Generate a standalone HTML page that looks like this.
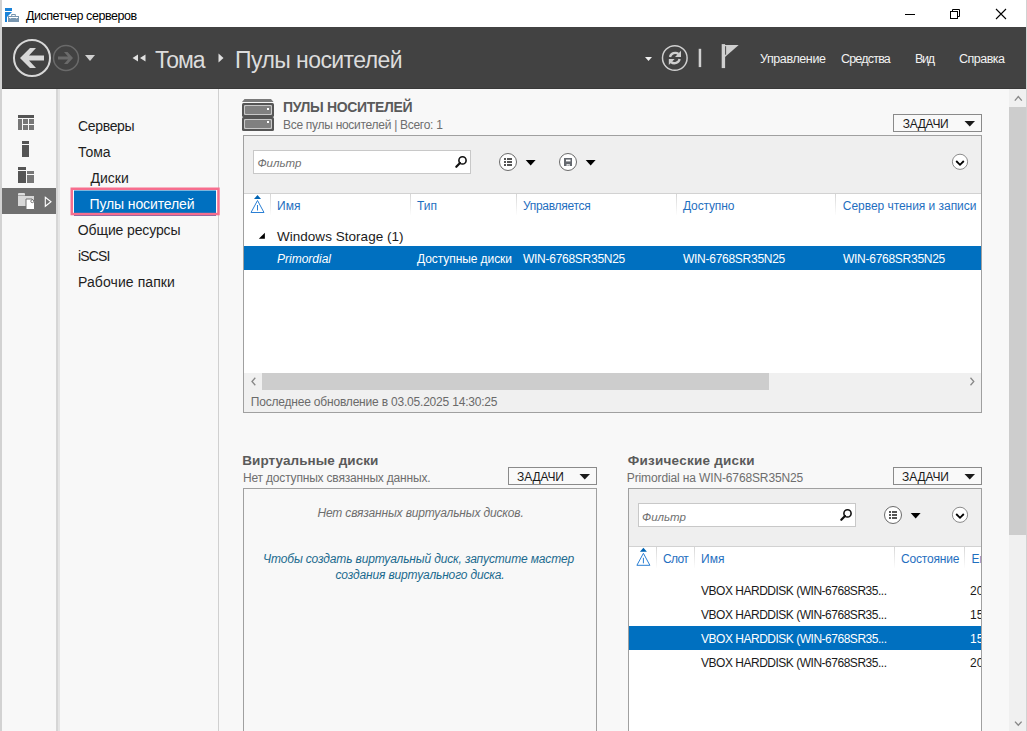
<!DOCTYPE html>
<html><head><meta charset="utf-8"><style>
html,body{margin:0;padding:0;}
body{width:1027px;height:731px;overflow:hidden;position:relative;background:#f8f8f8;font-family:"Liberation Sans",sans-serif;}
.a{position:absolute;box-sizing:border-box;}
.t{position:absolute;white-space:nowrap;line-height:1;font-family:"Liberation Sans",sans-serif;}
svg{position:absolute;left:0;top:0;}

</style></head><body>
<!-- window frame -->
<div class="a" style="left:0;top:0;width:1027px;height:27px;background:#fff"></div>
<div class="a" style="left:0;top:0;width:2px;height:731px;background:#d2d2d2"></div>
<div class="a" style="left:1026px;top:0;width:1px;height:731px;background:#d2d2d2"></div>
<!-- dark bar -->
<div class="a" style="left:2px;top:27px;width:1024px;height:62px;background:#424242;border-bottom:1px solid #393939"></div>
<!-- sidebar separator -->
<div class="a" style="left:56px;top:89px;width:4px;height:642px;background:linear-gradient(90deg,#d6d6d6 0,#d6d6d6 2px,#e5e5e5 2px)"></div>
<!-- nav right border -->
<div class="a" style="left:218px;top:89px;width:1px;height:642px;background:#d0d0d0"></div>
<!-- sidebar selected -->
<div class="a" style="left:2px;top:188px;width:54px;height:26px;background:#707070"></div>
<!-- nav selected -->
<svg width="1027" height="731" style="position:absolute;left:0;top:0">
<rect x="73" y="190" width="144" height="23" fill="#fafafa"/>
<rect x="74" y="190.5" width="142" height="25.5" fill="#0070c0"/>
<rect x="74" y="215" width="142" height="1" fill="#6f64a6"/>
<rect x="71.75" y="188.75" width="146.7" height="25.3" fill="none" stroke="#f76e8e" stroke-width="2.5"/>
<rect x="218" y="89" width="1" height="98" fill="#d0d0d0"/>
</svg>
<!-- vertical scrollbar -->
<div class="a" style="left:1009px;top:89px;width:17px;height:642px;background:#f0f0f0"></div>
<div class="a" style="left:1009px;top:107px;width:17px;height:428px;background:#cdcdcd"></div>

<!-- top panel -->
<div class="a" style="left:243px;top:135px;width:739px;height:278px;background:#fff;border:1px solid #a0a0a0"></div>
<div class="a" style="left:244px;top:136px;width:737px;height:58px;background:#efefef;border-bottom:1px solid #d2d2d2"></div>
<div class="a" style="left:253px;top:150px;width:218px;height:24px;background:#fff;border:1px solid #c8c8c8"></div>
<!-- col separators -->
<div class="a" style="left:270px;top:194px;width:1px;height:21px;background:linear-gradient(#d6d6d6,#fdfdfd)"></div>
<div class="a" style="left:410px;top:194px;width:1px;height:21px;background:linear-gradient(#d6d6d6,#fdfdfd)"></div>
<div class="a" style="left:516px;top:194px;width:1px;height:21px;background:linear-gradient(#d6d6d6,#fdfdfd)"></div>
<div class="a" style="left:676px;top:194px;width:1px;height:21px;background:linear-gradient(#d6d6d6,#fdfdfd)"></div>
<div class="a" style="left:835px;top:194px;width:1px;height:21px;background:linear-gradient(#d6d6d6,#fdfdfd)"></div>
<!-- selected row -->
<div class="a" style="left:244px;top:246px;width:737px;height:24px;background:#0070c0"></div>
<!-- h scrollbar -->
<div class="a" style="left:244px;top:373px;width:737px;height:17px;background:#f0f0f0"></div>
<div class="a" style="left:262px;top:373px;width:507px;height:17px;background:#cdcdcd"></div>
<div class="a" style="left:244px;top:390px;width:737px;height:22px;background:#f0f0f0"></div>
<!-- ЗАДАЧИ buttons -->
<div class="a" style="left:893px;top:114px;width:89px;height:18px;background:#f9f9f9;border:1px solid #8a8a8a"></div>
<div class="a" style="left:508px;top:467px;width:89px;height:18px;background:#f9f9f9;border:1px solid #8a8a8a"></div>
<div class="a" style="left:893px;top:467px;width:89px;height:18px;background:#f9f9f9;border:1px solid #8a8a8a"></div>

<!-- lower left panel -->
<div class="a" style="left:243px;top:488px;width:354px;height:250px;background:#f8f8f8;border:1px solid #a0a0a0"></div>
<!-- lower right panel -->
<div class="a" style="left:628px;top:488px;width:354px;height:250px;background:#fff;border:1px solid #a0a0a0"></div>
<div class="a" style="left:629px;top:489px;width:352px;height:58px;background:#efefef;border-bottom:1px solid #d2d2d2"></div>
<div class="a" style="left:638px;top:503px;width:218px;height:24px;background:#fff;border:1px solid #c8c8c8"></div>
<div class="a" style="left:656px;top:547px;width:1px;height:21px;background:linear-gradient(#d6d6d6,#fdfdfd)"></div>
<div class="a" style="left:694px;top:547px;width:1px;height:21px;background:linear-gradient(#d6d6d6,#fdfdfd)"></div>
<div class="a" style="left:894px;top:547px;width:1px;height:21px;background:linear-gradient(#d6d6d6,#fdfdfd)"></div>
<div class="a" style="left:964px;top:547px;width:1px;height:21px;background:linear-gradient(#d6d6d6,#fdfdfd)"></div>
<div class="a" style="left:629px;top:626px;width:352px;height:24px;background:#0070c0"></div>

<svg width="1027" height="731" viewBox="0 0 1027 731">
<!-- app icon -->
<rect x="5" y="8" width="7" height="3" fill="#1a82d8"/>
<path d="M5 12 H12 L7 17 V22 H5 Z" fill="#1a82d8"/>
<path d="M11.2 16 V14.6 Q11.2 14 11.8 14 H15.2 Q15.8 14 15.8 14.6 V16 H14.8 V15 H12.2 V16 Z" fill="#7896b0"/>
<rect x="8" y="16" width="11" height="6" fill="#7896b0"/>
<path d="M9 17 H18 V18 H16.8 L16.3 19 L15.8 18 H11.2 L10.7 19 L10.2 18 H9 Z" fill="#fff"/>
<!-- caption buttons -->
<line x1="905" y1="14.5" x2="915" y2="14.5" stroke="#000" stroke-width="1"/>
<rect x="950.5" y="11.5" width="7" height="7" fill="none" stroke="#000"/>
<path d="M952.5 11.5 V9.5 H959.5 V16.5 H957.5" fill="none" stroke="#000"/>
<path d="M996 9 L1006 19 M1006 9 L996 19" stroke="#000" stroke-width="1.1"/>
<!-- back/forward -->
<circle cx="32" cy="58" r="18" fill="none" stroke="#d8d8d8" stroke-width="2"/>
<path d="M20 58 L30 48 H36 L29 55.5 H44 V60.5 H29 L36 68 H30 Z" fill="#d8d8d8"/>
<circle cx="66" cy="58" r="12.5" fill="none" stroke="#6a6a6a" stroke-width="1.5"/>
<path d="M58 56.5 H68 L64 52 H67.5 L73 58 L67.5 64 H64 L68 59.5 H58 Z" fill="#6a6a6a"/>
<path d="M85 55 H95 L90 61 Z" fill="#d0d0d0"/>
<!-- breadcrumb arrows -->
<path d="M132.5 58 L138 54.5 V61.5 Z M140 58 L145.5 54.5 V61.5 Z" fill="#e0e0e0"/>
<path d="M218.5 53.5 L223.5 58 L218.5 62.5 Z" fill="#e0e0e0"/>
<!-- refresh area -->
<path d="M645 57 H652 L648.5 61 Z" fill="#f0f0f0"/>
<circle cx="674.8" cy="58" r="12.3" fill="none" stroke="#cfcfcf" stroke-width="1.5"/>
<path d="M670 57 A5.3 5.3 0 0 1 678.5 54" fill="none" stroke="#cfcfcf" stroke-width="2.3"/>
<path d="M681 50.8 V57 H675 Z" fill="#cfcfcf"/>
<path d="M679.6 59 A5.3 5.3 0 0 1 671 62" fill="none" stroke="#cfcfcf" stroke-width="2.3"/>
<path d="M668.8 65 V59 H674.6 Z" fill="#cfcfcf"/>
<rect x="698.7" y="48.8" width="2.5" height="18.3" fill="#d0d0d0"/>
<rect x="721.7" y="44.1" width="3.4" height="24" fill="#d0d0d0"/>
<path d="M725 45 H738.7 L725 57 Z" fill="#cfcfcf"/>
<rect x="725.1" y="46.2" width="1" height="8.5" fill="#4a4a4a"/>
<!-- sidebar icons -->
<rect x="18" y="115" width="16" height="3" fill="#555"/>
<rect x="18" y="119" width="4" height="11" fill="#777"/>
<rect x="23" y="119" width="5" height="5" fill="#777"/>
<rect x="29" y="119" width="5" height="5" fill="#777"/>
<rect x="23" y="125" width="5" height="5" fill="#777"/>
<rect x="29" y="125" width="5" height="5" fill="#777"/>
<rect x="22" y="141" width="7" height="3" fill="#555"/>
<rect x="22" y="145" width="7" height="12" fill="#555"/>
<rect x="18" y="167" width="8" height="3" fill="#555"/>
<rect x="18" y="171" width="8" height="12" fill="#555"/>
<rect x="27" y="171" width="7" height="3" fill="#777"/>
<rect x="27" y="175" width="7" height="8" fill="#777"/>
<path d="M18 194 Q18 193 19 193 H24 Q25 193 25 194 V195.5 H18 Z" fill="#dedede"/>
<rect x="18" y="196" width="16" height="10" fill="#d9d9d9"/>
<path d="M26 199 H32 L34.5 201.5 V209.5 H26 Z" fill="#fff" stroke="#707070" stroke-width="1"/>
<circle cx="32.3" cy="201.2" r="1.5" fill="#fff" stroke="#6a6a6a" stroke-width="0.9"/>
<path d="M45.3 197.3 L51 201.8 L45.3 206.3 Z" fill="none" stroke="#fff" stroke-width="1.1"/>
<!-- header server icon -->
<path d="M244.5 99 H271 L273.5 102 H242 Z" fill="#7a7a7a"/>
<rect x="242" y="103" width="32" height="14" rx="1.5" fill="#555"/>
<rect x="244" y="105" width="28" height="10" rx="1" fill="#c8c8c8"/>
<rect x="245" y="106" width="26" height="8" rx="1" fill="#808080"/>
<rect x="267" y="108" width="2" height="2" fill="#fff"/>
<rect x="242" y="117" width="32" height="14" rx="1.5" fill="#555"/>
<rect x="244" y="119" width="28" height="10" rx="1" fill="#c8c8c8"/>
<rect x="245" y="120" width="26" height="8" rx="1" fill="#808080"/>
<rect x="267" y="121" width="2" height="2" fill="#fff"/>
<!-- search icons -->
<g id="srch">
<circle cx="462.5" cy="160.4" r="3.6" fill="none" stroke="#111" stroke-width="1.6"/>
<line x1="460" y1="163" x2="456.3" y2="166.8" stroke="#111" stroke-width="2.2" stroke-linecap="round"/>
</g>
<use href="#srch" x="385" y="353"/>
<!-- toolbar icons -->
<g id="lst">
<circle cx="508" cy="162" r="8.5" fill="#fff" stroke="#6a6a6a" stroke-width="1"/>
<rect x="504" y="158" width="2" height="2" fill="#555"/><rect x="507" y="158" width="5" height="2" fill="#555"/>
<rect x="504" y="161" width="2" height="2" fill="#555"/><rect x="507" y="161" width="5" height="2" fill="#555"/>
<rect x="504" y="164" width="2" height="2" fill="#555"/><rect x="507" y="164" width="5" height="2" fill="#555"/>
<path d="M525.7 160 H535.6 L530.65 165.5 Z" fill="#000"/>
</g>
<use href="#lst" x="385" y="353"/>
<circle cx="568" cy="162" r="8.5" fill="#fff" stroke="#6a6a6a" stroke-width="1"/>
<rect x="564" y="158" width="8" height="8" fill="#64686e"/><rect x="566" y="159.6" width="4.5" height="1.8" fill="#fff"/><rect x="566.6" y="164" width="3" height="2" fill="#fff"/><rect x="567.5" y="164.6" width="1.2" height="1.2" fill="#64686e"/>
<path d="M585.7 160 H595.6 L590.65 165.5 Z" fill="#000"/>
<g id="exp">
<circle cx="960" cy="161.8" r="7.6" fill="#fff" stroke="#8a8a8a" stroke-width="1"/>
<path d="M956.2 161 L960 164.8 L963.8 161" fill="none" stroke="#000" stroke-width="1.8"/>
</g>
<use href="#exp" x="0" y="353"/>
<!-- ЗАДАЧИ triangles -->
<path d="M964.5 121 H975 L969.75 126.5 Z" fill="#1a1a1a"/>
<path d="M579.5 474 H590 L584.75 479.5 Z" fill="#1a1a1a"/>
<path d="M964.5 474 H975 L969.75 479.5 Z" fill="#1a1a1a"/>
<!-- warning icons -->
<g id="warn">
<path d="M254 199 L257.5 195 L261 199 Z" fill="#0064b4"/>
<path d="M257.5 200.5 L251 212.5 H264 Z" fill="none" stroke="#2a7fd4" stroke-width="1"/>
<line x1="257.5" y1="205" x2="257.5" y2="210.5" stroke="#2a7fd4" stroke-width="1"/>
</g>
<use href="#warn" x="385.9" y="352.8"/>
<!-- h scroll arrows -->
<path d="M255.3 377.8 L252 381.5 L255.3 385.2" fill="none" stroke="#888" stroke-width="1.3"/>
<path d="M970.5 377.8 L973.8 381.5 L970.5 385.2" fill="none" stroke="#888" stroke-width="1.3"/>
<!-- v scroll arrows -->
<path d="M1014.8 100.6 L1018.3 96.6 L1021.8 100.6" fill="none" stroke="#888" stroke-width="1.3"/>
<path d="M1015 721.6 L1018.3 725.3 L1021.6 721.6" fill="none" stroke="#888" stroke-width="1.4"/>
<!-- group triangle -->
<path d="M258.8 238.8 L264.9 232.8 V238.8 Z" fill="#000"/>
</svg>

<span class="t" id="t0" style="left:25.90px;top:10px;font-size:12.5px;color:#000;letter-spacing:-0.441px;">Диспетчер серверов</span>
<span class="t" id="t1" style="left:154.95px;top:49px;font-size:23px;color:#dcdcdc;letter-spacing:-1.000px;">Тома</span>
<span class="t" id="t2" style="left:235.10px;top:49px;font-size:23px;color:#dcdcdc;letter-spacing:-0.577px;">Пулы носителей</span>
<span class="t" id="t3" style="left:759.95px;top:53px;font-size:12.5px;color:#f2f2f2;letter-spacing:-0.389px;">Управление</span>
<span class="t" id="t4" style="left:840.95px;top:53px;font-size:12.5px;color:#f2f2f2;letter-spacing:-0.786px;">Средства</span>
<span class="t" id="t5" style="left:915.00px;top:53px;font-size:12.5px;color:#f2f2f2;letter-spacing:-1.250px;">Вид</span>
<span class="t" id="t6" style="left:959.00px;top:53px;font-size:12.5px;color:#f2f2f2;letter-spacing:-0.500px;">Справка</span>
<span class="t" id="t7" style="left:78.00px;top:119px;font-size:14px;color:#1e1e1e;letter-spacing:-0.333px;">Серверы</span>
<span class="t" id="t8" style="left:78.00px;top:145px;font-size:14px;color:#1e1e1e;">Тома</span>
<span class="t" id="t9" style="left:90.57px;top:171px;font-size:14px;color:#1e1e1e;">Диски</span>
<span class="t" id="t10" style="left:89.52px;top:197px;font-size:14px;color:#ffffff;letter-spacing:-0.115px;">Пулы носителей</span>
<span class="t" id="t11" style="left:77.84px;top:223px;font-size:14px;color:#1e1e1e;letter-spacing:-0.125px;">Общие ресурсы</span>
<span class="t" id="t12" style="left:78.05px;top:249px;font-size:14px;color:#1e1e1e;letter-spacing:-0.875px;">iSCSI</span>
<span class="t" id="t13" style="left:78.05px;top:275px;font-size:14px;color:#1e1e1e;letter-spacing:0.083px;">Рабочие папки</span>
<span class="t" id="t14" style="left:283.00px;top:100px;font-size:14px;color:#5a5a5a;font-weight:700;letter-spacing:-0.346px;">ПУЛЫ НОСИТЕЛЕЙ</span>
<span class="t" id="t15" style="left:283.00px;top:119px;font-size:12px;color:#6e6e6e;letter-spacing:-0.286px;">Все пулы носителей | Всего: 1</span>
<span class="t" id="t16" style="left:902.74px;top:118px;font-size:12px;color:#1a1a1a;letter-spacing:-0.300px;">ЗАДАЧИ</span>
<span class="t" id="t17" style="left:257.38px;top:158px;font-size:11.5px;color:#707070;font-style:italic;">Фильтр</span>
<span class="t" id="t18" style="left:277.05px;top:200px;font-size:12px;color:#1f6fbf;">Имя</span>
<span class="t" id="t19" style="left:417.00px;top:200px;font-size:12px;color:#1f6fbf;">Тип</span>
<span class="t" id="t20" style="left:523.00px;top:200px;font-size:12px;color:#1f6fbf;letter-spacing:-0.300px;">Управляется</span>
<span class="t" id="t21" style="left:683.00px;top:200px;font-size:12px;color:#1f6fbf;letter-spacing:-0.143px;">Доступно</span>
<span class="t" id="t22" style="left:842.84px;top:200px;font-size:12px;color:#1f6fbf;letter-spacing:-0.043px;">Сервер чтения и записи</span>
<span class="t" id="t23" style="left:276.95px;top:230px;font-size:13.5px;color:#1a1a1a;letter-spacing:0.033px;">Windows Storage (1)</span>
<span class="t" id="t24" style="left:277.00px;top:253px;font-size:12px;color:#fff;font-style:italic;">Primordial</span>
<span class="t" id="t25" style="left:417.00px;top:253px;font-size:12px;color:#fff;letter-spacing:-0.071px;">Доступные диски</span>
<span class="t" id="t26" style="left:523.00px;top:253px;font-size:12px;color:#fff;letter-spacing:-0.271px;">WIN-6768SR35N25</span>
<span class="t" id="t27" style="left:683.00px;top:253px;font-size:12px;color:#fff;letter-spacing:-0.271px;">WIN-6768SR35N25</span>
<span class="t" id="t28" style="left:843.00px;top:253px;font-size:12px;color:#fff;letter-spacing:-0.271px;">WIN-6768SR35N25</span>
<span class="t" id="t29" style="left:250.84px;top:396px;font-size:12px;color:#6a6a6a;letter-spacing:-0.198px;">Последнее обновление в 03.05.2025 14:30:25</span>
<span class="t" id="t30" style="left:242.26px;top:454px;font-size:13.5px;color:#5a5a5a;font-weight:700;letter-spacing:0.062px;">Виртуальные диски</span>
<span class="t" id="t31" style="left:243.00px;top:472px;font-size:12px;color:#6e6e6e;letter-spacing:-0.187px;">Нет доступных связанных данных.</span>
<span class="t" id="t32" style="left:517.00px;top:471px;font-size:12px;color:#1a1a1a;letter-spacing:-0.100px;">ЗАДАЧИ</span>
<span class="t" id="t33" style="left:420.53px;top:507px;font-size:12px;color:#6e6e6e;font-style:italic;letter-spacing:-0.156px;transform:translateX(-50%);">Нет связанных виртуальных дисков.</span>
<span class="t" id="t34" style="left:418.60px;top:553px;font-size:12px;color:#1b6a8e;font-style:italic;letter-spacing:-0.147px;transform:translateX(-50%);">Чтобы создать виртуальный диск, запустите мастер</span>
<span class="t" id="t35" style="left:420.03px;top:569px;font-size:12px;color:#1b6a8e;font-style:italic;letter-spacing:-0.152px;transform:translateX(-50%);">создания виртуального диска.</span>
<span class="t" id="t36" style="left:627.74px;top:454px;font-size:13.5px;color:#5a5a5a;font-weight:700;letter-spacing:0.240px;">Физические диски</span>
<span class="t" id="t37" style="left:626.84px;top:472px;font-size:12px;color:#6e6e6e;letter-spacing:-0.129px;">Primordial на WIN-6768SR35N25</span>
<span class="t" id="t38" style="left:902.00px;top:471px;font-size:12px;color:#1a1a1a;letter-spacing:-0.100px;">ЗАДАЧИ</span>
<span class="t" id="t39" style="left:642.00px;top:512px;font-size:11.5px;color:#707070;font-style:italic;">Фильтр</span>
<span class="t" id="t40" style="left:663.00px;top:553px;font-size:12px;color:#1f6fbf;letter-spacing:-0.667px;">Слот</span>
<span class="t" id="t41" style="left:701.05px;top:553px;font-size:12px;color:#1f6fbf;">Имя</span>
<span class="t" id="t42" style="left:901.05px;top:553px;font-size:12px;color:#1f6fbf;letter-spacing:-0.188px;">Состояние</span>
<span class="t" id="t43" style="left:971.43px;top:553px;font-size:12px;color:#1f6fbf;width:9.57px;overflow:hidden;">Ем</span>
<span class="t" id="t44" style="left:701.00px;top:585px;font-size:12px;color:#1a1a1a;letter-spacing:-0.486px;">VBOX HARDDISK (WIN-6768SR35...</span>
<span class="t" id="t45" style="left:970.05px;top:585px;font-size:12px;color:#1a1a1a;width:10.95px;overflow:hidden;">20</span>
<span class="t" id="t46" style="left:701.00px;top:609px;font-size:12px;color:#1a1a1a;letter-spacing:-0.486px;">VBOX HARDDISK (WIN-6768SR35...</span>
<span class="t" id="t47" style="left:970.05px;top:609px;font-size:12px;color:#1a1a1a;width:10.95px;overflow:hidden;">15</span>
<span class="t" id="t48" style="left:701.00px;top:633px;font-size:12px;color:#fff;letter-spacing:-0.486px;">VBOX HARDDISK (WIN-6768SR35...</span>
<span class="t" id="t49" style="left:970.05px;top:633px;font-size:12px;color:#fff;width:10.95px;overflow:hidden;">15</span>
<span class="t" id="t50" style="left:701.00px;top:657px;font-size:12px;color:#1a1a1a;letter-spacing:-0.486px;">VBOX HARDDISK (WIN-6768SR35...</span>
<span class="t" id="t51" style="left:970.05px;top:657px;font-size:12px;color:#1a1a1a;width:10.95px;overflow:hidden;">20</span>
</body></html>
